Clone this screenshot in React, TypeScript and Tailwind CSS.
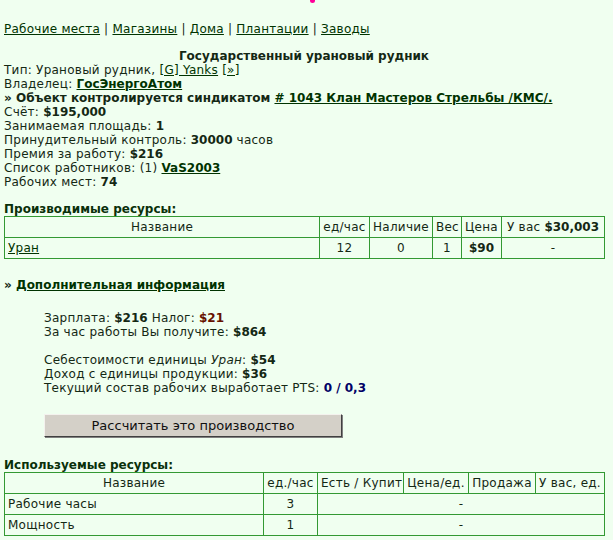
import React from "react";

const LINK = "text-[#003300] underline";
const TD = "border border-[#339933] px-[3px] py-[3px] leading-[14px]";

function Line({ children }: { children: React.ReactNode }) {
  return <div className="leading-[14px]">{children}</div>;
}

export default function App() {
  return (
    <div
      className="relative min-h-[540px] bg-[#f0fff0] text-[12px] text-[#142814] tracking-[0.25px] [&_b]:tracking-normal"
      style={{ fontFamily: '"DejaVu Sans", Verdana, sans-serif' }}
    >
      {/* magenta marker cut off at the top edge */}
      <div className="absolute left-[310px] top-0 h-[3px] w-[5px] rounded-b-sm bg-[#ff0099]" />

      <div className="w-[600px] ml-[4px] pt-[22px]">
        <Line>
          <a className={LINK}>Рабочие места</a> | <a className={LINK}>Магазины</a> |{" "}
          <a className={LINK}>Дома</a> | <a className={LINK}>Плантации</a> |{" "}
          <a className={LINK}>Заводы</a>
        </Line>

        <div className="mt-[13px] text-center font-bold leading-[14px] tracking-normal">
          Государственный урановый рудник
        </div>
        <Line>
          Тип: Урановый рудник, <a className={LINK}>[G] Yanks</a> <a className={LINK}>[»]</a>
        </Line>
        <Line>
          Владелец: <a className={`${LINK} font-bold tracking-normal`}>ГосЭнергоАтом</a>
        </Line>
        <Line>
          <b>
            » Объект контролируется синдикатом{" "}
            <a className={LINK}># 1043 Клан Мастеров Стрельбы /КМС/.</a>
          </b>
        </Line>
        <Line>
          Счёт: <b>$195,000</b>
        </Line>
        <Line>
          Занимаемая площадь: <b>1</b>
        </Line>
        <Line>
          Принудительный контроль: <b>30000</b> часов
        </Line>
        <Line>
          Премия за работу: <b>$216</b>
        </Line>
        <Line>
          Список работников: (1) <a className={`${LINK} font-bold tracking-normal`}>VaS2003</a>
        </Line>
        <Line>
          Рабочих мест: <b>74</b>
        </Line>

        <div className="mt-[13px] font-bold leading-[14px] tracking-normal text-[#0a300a]">
          Производимые ресурсы:
        </div>
        <table className="w-[600px] table-fixed border-collapse">
          <colgroup>
            <col className="w-[315px]" />
            <col className="w-[50px]" />
            <col className="w-[63px]" />
            <col className="w-[29px]" />
            <col className="w-[40px]" />
            <col className="w-[103px]" />
          </colgroup>
          <tbody>
            <tr className="text-center">
              <td className={TD}>Название</td>
              <td className={`${TD} px-0 whitespace-nowrap`}>ед/час</td>
              <td className={`${TD} px-0 whitespace-nowrap`}>Наличие</td>
              <td className={`${TD} px-0 whitespace-nowrap`}>Вес</td>
              <td className={`${TD} px-0 whitespace-nowrap`}>Цена</td>
              <td className={`${TD} px-0 whitespace-nowrap`}>
                У вас <b>$30,003</b>
              </td>
            </tr>
            <tr className="text-center">
              <td className={`${TD} text-left`}>
                <a className={LINK}>Уран</a>
              </td>
              <td className={TD}>12</td>
              <td className={TD}>0</td>
              <td className={TD}>1</td>
              <td className={TD}>
                <b>$90</b>
              </td>
              <td className={TD}>-</td>
            </tr>
          </tbody>
        </table>

        <div className="mt-[19px] font-bold leading-[14px] tracking-normal">
          » <a className={LINK}>Дополнительная информация</a>
        </div>

        <div className="mt-[19px] ml-[40px]">
          <Line>
            Зарплата: <b>$216</b> Налог: <b className="text-[#661100]">$21</b>
          </Line>
          <Line>
            За час работы Вы получите: <b>$864</b>
          </Line>
          <div className="h-[14px]" />
          <Line>
            Себестоимости единицы <i>Уран</i>: <b>$54</b>
          </Line>
          <Line>
            Доход с единицы продукции: <b>$36</b>
          </Line>
          <Line>
            Текущий состав рабочих выработает PTS: <b className="text-[#000066]">0 / 0,3</b>
          </Line>

          <button
            className="mt-[19px] h-[23px] w-[298px] border border-t-[#f4f2ee] border-l-[#f4f2ee] border-r-[#404040] border-b-[#404040] bg-[#d4d0c8] text-[13px] leading-[16px] tracking-normal text-[#101010] shadow-[1px_1px_0_#808080]"
            style={{ fontFamily: '"DejaVu Sans", Tahoma, sans-serif' }}
          >
            Рассчитать это производство
          </button>
        </div>

        <div className="mt-[21px] font-bold leading-[14px] tracking-normal text-[#0a300a]">
          Используемые ресурсы:
        </div>
        <table className="w-[600px] table-fixed border-collapse">
          <colgroup>
            <col className="w-[259px]" />
            <col className="w-[54px]" />
            <col className="w-[86px]" />
            <col className="w-[65px]" />
            <col className="w-[67px]" />
            <col className="w-[69px]" />
          </colgroup>
          <tbody>
            <tr className="text-center">
              <td className={TD}>Название</td>
              <td className={`${TD} px-0 whitespace-nowrap`}>ед./час</td>
              <td className={`${TD} px-0 whitespace-nowrap`}>Есть / Купит</td>
              <td className={`${TD} px-0 whitespace-nowrap`}>Цена/ед.</td>
              <td className={`${TD} px-0 whitespace-nowrap`}>Продажа</td>
              <td className={`${TD} px-0 whitespace-nowrap`}>У вас, ед.</td>
            </tr>
            <tr>
              <td className={TD}>Рабочие часы</td>
              <td className={`${TD} text-center`}>3</td>
              <td className={`${TD} text-center`} colSpan={4}>
                -
              </td>
            </tr>
            <tr>
              <td className={TD}>Мощность</td>
              <td className={`${TD} text-center`}>1</td>
              <td className={`${TD} text-center`} colSpan={4}>
                -
              </td>
            </tr>
          </tbody>
        </table>
      </div>
    </div>
  );
}
